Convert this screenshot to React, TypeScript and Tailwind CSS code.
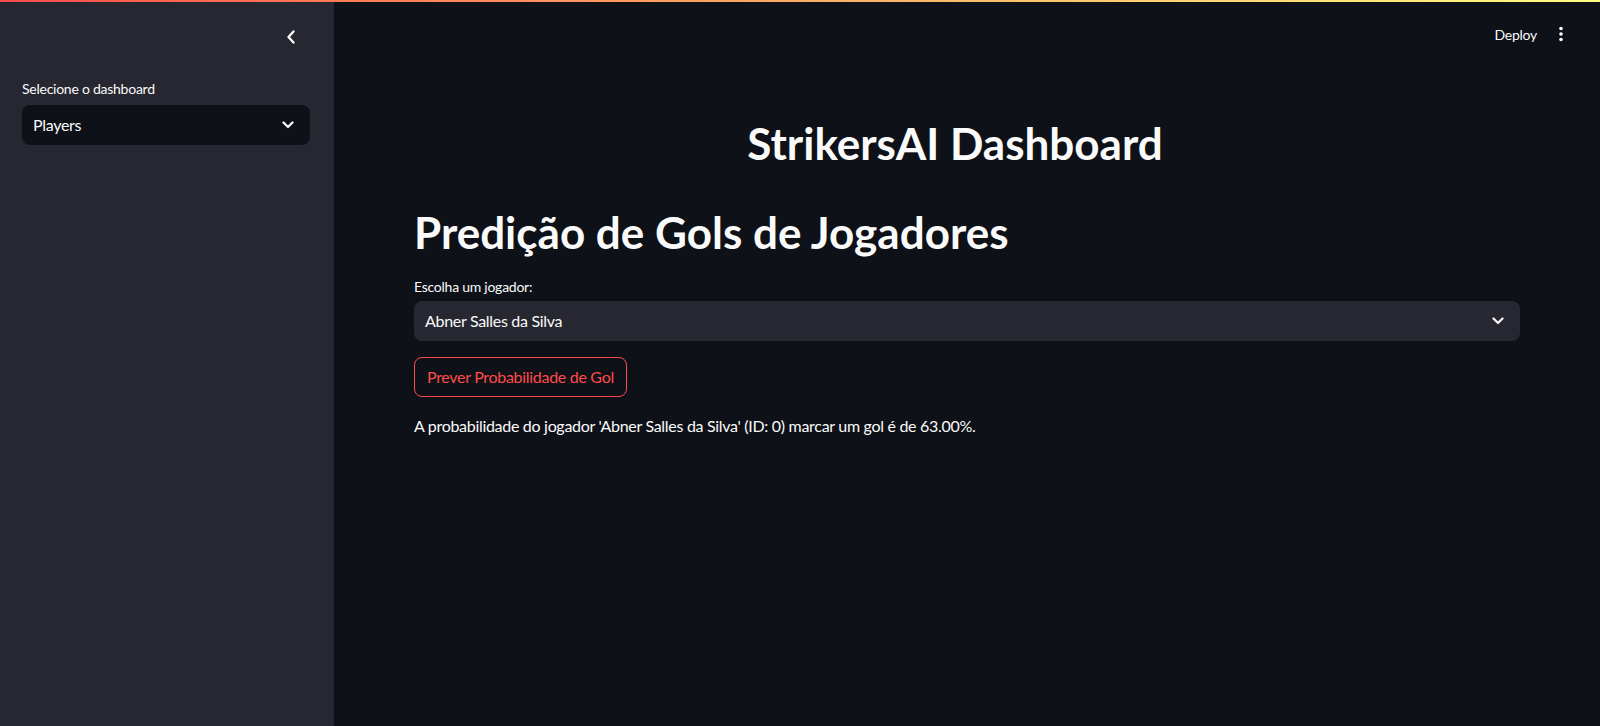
import React from 'react';

const font = { fontFamily: 'Lato, "Noto Sans", sans-serif' };

function ChevronDown() {
  return (
    <svg width="12" height="8" viewBox="0 0 12 8" fill="none">
      <path d="M1.5 1.5L6 6L10.5 1.5" stroke="#fafafa" strokeWidth="2.2" strokeLinecap="round" strokeLinejoin="round" />
    </svg>
  );
}

function Sidebar() {
  return (
    <aside className="w-[334px] shrink-0 h-full bg-[#262730] flex flex-col">
      <div className="h-[60px] flex items-end justify-end pr-[38px] pb-[16px]">
        <svg width="10" height="16" viewBox="0 0 10 16" fill="none" className="mb-[-1px]">
          <path d="M7.5 2.5L2.5 8L7.5 13.5" stroke="#fafafa" strokeWidth="2.4" strokeLinecap="round" strokeLinejoin="round" />
        </svg>
      </div>
      <div className="px-[22px] pt-[19px]">
        <label className="block text-[14px] leading-[20px] tracking-[-0.25px] text-[#fafafa] mb-[6px]">Selecione o dashboard</label>
        <div className="h-[40px] w-[288px] bg-[#0e1117] rounded-[8px] flex items-center justify-between pl-[11px] pr-[16px]">
          <span className="text-[16px] tracking-[-0.3px] text-[#fafafa]">Players</span>
          <ChevronDown />
        </div>
      </div>
    </aside>
  );
}

export default function App() {
  return (
    <div className="relative flex w-full h-[726px] bg-[#0e1117] overflow-hidden" style={font}>
      <div className="absolute top-0 left-0 right-0 h-[2px] bg-gradient-to-r from-[#ff4b4b] to-[#fffd80]" />
      <Sidebar />
      <main className="flex-1 flex flex-col min-w-0">
        <header className="h-[60px] flex items-center justify-end pr-[37px] pt-[8px]">
          <span className="text-[14px] tracking-[-0.25px] text-[#fafafa] mr-[22px]">Deploy</span>
          <svg width="4" height="16" viewBox="0 0 4 16" fill="#fafafa">
            <circle cx="2" cy="2.5" r="1.8" />
            <circle cx="2" cy="8" r="1.8" />
            <circle cx="2" cy="13.5" r="1.8" />
          </svg>
        </header>
        <div className="px-[80px] flex flex-col">
          <h1 className="mt-[57px] text-center pr-[24px] text-[44px] leading-[53px] font-bold text-[#fafafa]">StrikersAI Dashboard</h1>
          <h1 className="mt-[36px] text-[44px] leading-[53px] font-bold text-[#fafafa]">Predição de Gols de Jogadores</h1>
          <label className="mt-[18px] text-[14px] leading-[20px] tracking-[-0.25px] text-[#fafafa]">Escolha um jogador:</label>
          <div className="mt-[4px] h-[40px] bg-[#262730] rounded-[8px] flex items-center justify-between pl-[11px] pr-[16px]">
            <span className="text-[16px] tracking-[-0.3px] text-[#fafafa]">Abner Salles da Silva</span>
            <ChevronDown />
          </div>
          <div className="mt-[16px]">
            <button className="h-[40px] px-[12px] rounded-[8px] border border-[#ff4b4b] text-[#ff4b4b] text-[16px] tracking-[-0.3px] bg-transparent">
              Prever Probabilidade de Gol
            </button>
          </div>
          <p className="mt-[17px] text-[16px] leading-[24px] tracking-[-0.3px] text-[#fafafa]">
            A probabilidade do jogador 'Abner Salles da Silva' (ID: 0) marcar um gol é de 63.00%.
          </p>
        </div>
      </main>
    </div>
  );
}
